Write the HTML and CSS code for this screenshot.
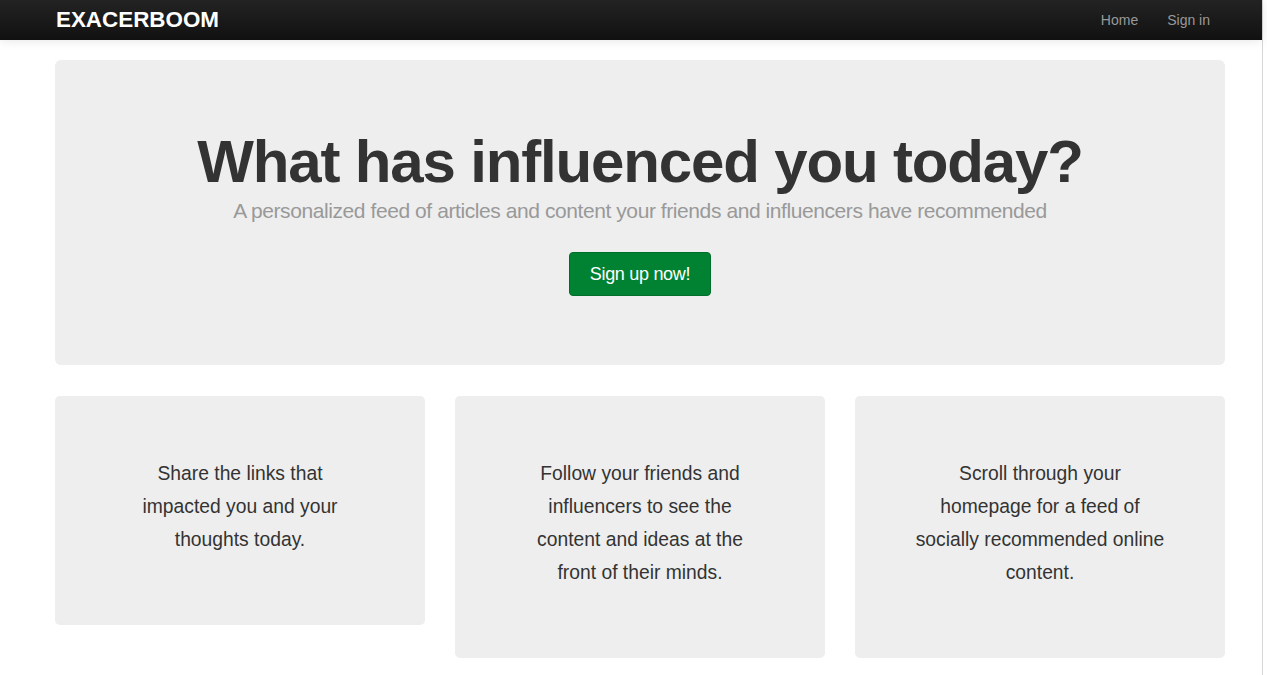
FILE: index.html
```html
<!DOCTYPE html>
<html>
<head>
<meta charset="utf-8">
<title>Exacerboom</title>
<link rel="stylesheet" href="styles.css">
</head>
<body>
<div class="frame">
  <header class="navbar">
    <div class="nav-inner">
      <a class="brand" href="#">EXACERBOOM</a>
      <nav class="nav-links">
        <a href="#">Home</a>
        <a href="#">Sign in</a>
      </nav>
    </div>
  </header>
  <main class="container">
    <section class="jumbotron">
      <h1>What has influenced you today?</h1>
      <p class="lead">A personalized feed of articles and content your friends and influencers have recommended</p>
      <a class="btn-signup" href="#">Sign up now!</a>
    </section>
    <section class="features">
      <div class="card"><p>Share the links that<br>impacted you and your<br>thoughts today.</p></div>
      <div class="card"><p>Follow your friends and<br>influencers to see the<br>content and ideas at the<br>front of their minds.</p></div>
      <div class="card"><p>Scroll through your<br>homepage for a feed of<br>socially recommended online<br>content.</p></div>
    </section>
  </main>
</div>
</body>
</html>
```

FILE: styles.css
```css
html, body {
  margin: 0;
  padding: 0;
  background: #fff;
}
body {
  font-family: "Liberation Sans", Arial, sans-serif;
  color: #333;
}
.frame {
  width: 1263px;
  min-height: 100vh;
  border-right: 1px solid #d6d6d6;
  box-sizing: border-box;
}
.navbar {
  height: 40px;
  background: linear-gradient(#232323, #111111);
  box-shadow: 0 1px 10px rgba(0,0,0,0.1);
  position: relative;
}
.nav-inner {
  width: 1170px;
  margin-left: 55px;
  height: 40px;
  display: flex;
  align-items: center;
  justify-content: space-between;
}
.brand {
  color: #fff;
  font-weight: bold;
  font-size: 22.4px;
  text-decoration: none;
  margin-left: 1px;
}
.nav-links {
  display: flex;
  padding-right: 15px;
  gap: 29px;
}
.nav-links a {
  color: #999;
  text-decoration: none;
  font-size: 14px;
}
.container {
  width: 1170px;
  margin-left: 55px;
  padding-top: 20px;
}
.jumbotron {
  background: #eee;
  border-radius: 6px;
  height: 305px;
  box-sizing: border-box;
  padding-top: 72px;
  text-align: center;
}
.jumbotron h1 {
  margin: 0;
  font-size: 60px;
  line-height: 60px;
  font-weight: bold;
  letter-spacing: -1.15px;
  color: #333;
}
.lead {
  margin: 4px 0 0;
  font-size: 21px;
  line-height: 30px;
  color: #999;
  letter-spacing: -0.42px;
}
.btn-signup {
  display: inline-block;
  margin-top: 26px;
  height: 44px;
  line-height: 42px;
  box-sizing: border-box;
  width: 142px;
  background: #018233;
  border: 1px solid #016d2a;
  border-radius: 4px;
  color: #fff;
  font-size: 18px;
  text-decoration: none;
  letter-spacing: -0.3px;
}
.features {
  display: flex;
  gap: 30px;
  align-items: flex-start;
  margin-top: 31px;
}
.card {
  flex: 1;
  background: #eee;
  border-radius: 5px;
  padding: 61px 20px 59px;
  text-align: center;
}
.card p {
  margin: 0 0 10px;
  font-size: 19.3px;
  line-height: 33px;
  color: #333;
}
```
